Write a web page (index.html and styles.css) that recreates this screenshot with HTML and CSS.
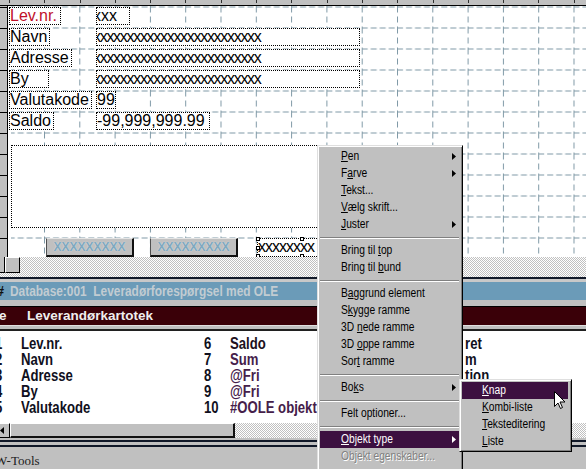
FILE: index.html
```html
<!DOCTYPE html>
<html lang="da">
<head>
<meta charset="utf-8">
<title>W-Tools</title>
<link rel="stylesheet" href="styles.css">
</head>
<body>
<div class="app">
  <div class="designer">
    <div class="hruler"></div>
    <div class="dmain">
      <div class="vruler"></div>
      <div class="canvas">
        <svg class="grid" width="578" height="251" viewBox="0 0 578 251">
          <defs>
            <pattern id="gp" x="0.7" y="0.5" width="35.3" height="21" patternUnits="userSpaceOnUse">
              <path d="M0 0.5H35.3" stroke="#7f99a6" stroke-width="1" stroke-dasharray="6 3" fill="none"/>
              <path d="M0.5 0V21" stroke="#7f99a6" stroke-width="1" stroke-dasharray="6 4" fill="none"/>
            </pattern>
          </defs>
          <rect width="578" height="251" fill="url(#gp)"/>
          <rect width="3" height="251" fill="#fff"/>
        </svg>
        <div class="form">
          <div class="rows">
            <div class="frow"><div class="lcell"><span class="lbl red">Lev.nr.</span></div><span class="fld f-short xs">xxx</span></div>
            <div class="frow"><div class="lcell"><span class="lbl">Navn</span></div><span class="fld f-long xs xl">xxxxxxxxxxxxxxxxxxxxxxxxx</span></div>
            <div class="frow"><div class="lcell"><span class="lbl">Adresse</span></div><span class="fld f-long xs xl">xxxxxxxxxxxxxxxxxxxxxxxxx</span></div>
            <div class="frow"><div class="lcell"><span class="lbl w-by">By</span></div><span class="fld f-long xs xl">xxxxxxxxxxxxxxxxxxxxxxxxx</span></div>
            <div class="frow"><div class="lcell"><span class="lbl">Valutakode</span></div><span class="fld f-num">99</span></div>
            <div class="frow"><div class="lcell"><span class="lbl">Saldo</span></div><span class="fld f-saldo">-99,999,999.99</span></div>
          </div>
          <div class="bigbox"></div>
          <div class="btnrow">
            <span class="dbtn">XXXXXXXXX</span>
            <span class="dbtn">XXXXXXXXX</span>
            <span class="fld f-sel">xxxxxxxx<i class="hd hd1"></i><i class="hd hd2"></i><i class="hd hd3"></i><i class="hd hd4"></i><i class="hd hd5"></i></span>
          </div>
        </div>
      </div>
    </div>
  </div>
  <div class="dscroll"><span class="sb1"></span><span class="sb2"></span></div>
  <div class="win">
    <div class="wtop"></div>
    <div class="cap1"><span class="capicon">#</span><span class="nar">Database:001&nbsp;&nbsp;Leveradørforespørgsel med OLE</span></div>
    <div class="gap6"></div>
    <div class="cap2"><span class="cap2e">e</span><span>Leverandørkartotek</span></div>
    <div class="sep2"></div>
    <div class="list">
      <div class="lrow"><span>1</span><span>Lev.nr.</span><span>6</span><span class="c2a">Saldo</span><span>11</span><span><b class="pre">Ænd</b>ret</span></div>
      <div class="lrow"><span>2</span><span>Navn</span><span>7</span><span class="c2">Sum</span><span>12</span><span><b class="pre">Datu</b>m</span></div>
      <div class="lrow"><span>3</span><span>Adresse</span><span>8</span><span class="c2">@Fri</span><span>13</span><span><b class="pre">Posi</b>tion</span></div>
      <div class="lrow"><span>4</span><span>By</span><span>9</span><span class="c2">@Fri</span><span>14</span><span>Note</span></div>
      <div class="lrow"><span>5</span><span>Valutakode</span><span>10</span><span class="c2">#OOLE objekt</span><span>15</span><span>Tekst</span></div>
    </div>
    <div class="lscroll"><span class="larrow"><svg width="4" height="7" viewBox="0 0 4 7"><path d="M4 0L0 3.5L4 7Z" fill="#000"/></svg></span><span class="thumb"></span></div>
    <div class="wbottom"></div>
  </div>
  <div class="status">W-Tools</div>
</div>

<div class="menu">
  <div class="mi"><span><u>P</u>en</span><svg class="arr" width="4" height="7" viewBox="0 0 4 7"><path d="M0 0L4 3.5L0 7Z"/></svg></div>
  <div class="mi"><span>F<u>a</u>rve</span><svg class="arr" width="4" height="7" viewBox="0 0 4 7"><path d="M0 0L4 3.5L0 7Z"/></svg></div>
  <div class="mi"><span><u>T</u>ekst...</span></div>
  <div class="mi"><span><u>V</u>ælg skrift...</span></div>
  <div class="mi"><span><u>J</u>uster</span><svg class="arr" width="4" height="7" viewBox="0 0 4 7"><path d="M0 0L4 3.5L0 7Z"/></svg></div>
  <div class="msep"></div>
  <div class="mi"><span>Bring til <u>t</u>op</span></div>
  <div class="mi"><span>Bring til <u>b</u>und</span></div>
  <div class="msep"></div>
  <div class="mi"><span>B<u>a</u>ggrund element</span></div>
  <div class="mi"><span>S<u>k</u>ygge ramme</span></div>
  <div class="mi"><span>3D <u>n</u>ede ramme</span></div>
  <div class="mi"><span>3D <u>o</u>ppe ramme</span></div>
  <div class="mi"><span>Sor<u>t</u> ramme</span></div>
  <div class="msep"></div>
  <div class="mi"><span>Bo<u>k</u>s</span><svg class="arr" width="4" height="7" viewBox="0 0 4 7"><path d="M0 0L4 3.5L0 7Z"/></svg></div>
  <div class="msep"></div>
  <div class="mi"><span>Felt optioner...</span></div>
  <div class="msep"></div>
  <div class="mi hl"><span><u>O</u>bjekt type</span><svg class="arr" width="4" height="7" viewBox="0 0 4 7"><path d="M0 0L4 3.5L0 7Z"/></svg></div>
  <div class="mi dis"><span>Objekt egenskaber...</span></div>
</div>

<div class="menu submenu">
  <div class="mi hl"><span><u>K</u>nap</span></div>
  <div class="mi"><span><u>K</u>ombi-liste</span></div>
  <div class="mi"><span><u>T</u>eksteditering</span></div>
  <div class="mi"><span><u>L</u>iste</span></div>
</div>

<svg class="cursor" width="13" height="19" viewBox="0 0 13 19"><path d="M0.5 0.5V15.5L4 12L6.5 17.5L8.5 16.5L6 11H11Z" fill="#fff" stroke="#000" stroke-width="1" stroke-linejoin="miter"/></svg>
</body>
</html>
```
FILE: styles.css
```css
* { box-sizing: border-box; }
html, body { margin: 0; padding: 0; }
body {
  width: 586px;
  height: 469px;
  overflow: hidden;
  position: relative;
  background: #c0c0c0;
  font-family: "Liberation Sans", Arial, sans-serif;
  color: #000;
}

.app { display: flex; flex-direction: column; height: 469px; }

/* narrow system font imitation */
.nar, .mi > span, .lrow > span {
  display: inline-block;
  transform: scaleX(0.82);
  transform-origin: 0 50%;
}

/* ---------- form designer ---------- */
.designer { height: 257px; flex: none; display: flex; flex-direction: column; }
.hruler {
  height: 6px;
  flex: none;
  background-color: #c0c0c0;
  border-bottom: 1px solid #000;
  background-image: repeating-linear-gradient(90deg, #303030 0 1px, transparent 1px 35.3px);
  background-size: 100% 3px;
  background-repeat: no-repeat;
  background-position: 9px 0;
}
.dmain { flex: 1; display: flex; min-height: 0; }
.vruler {
  width: 8px;
  flex: none;
  background-color: #c0c0c0;
  border-right: 1px solid #000;
  background-image: repeating-linear-gradient(180deg, #000 0 1px, transparent 1px 21px);
  background-position: 0 1px;
}
.canvas { flex: 1; display: grid; background: #fff; overflow: hidden; }
.canvas > * { grid-area: 1 / 1; }
.grid { display: block; }
.form { display: flex; flex-direction: column; padding: 1px 0 0 1px; }
.rows { display: flex; flex-direction: column; gap: 3px; }
.frow { display: flex; height: 18px; }
.lcell { width: 87px; flex: none; }

.lbl, .fld {
  display: inline-block;
  height: 18px;
  border: 1px dotted #000;
  background: #fff;
  font-size: 16px;
  line-height: 16px;
  white-space: nowrap;
  overflow: hidden;
}
.lbl { padding: 0 2px 0 0; }
.lbl.red { color: #c0102a; padding-right: 3px; }
.lbl.w-by { width: 40px; }
.f-short { width: 34px; }
.f-long { width: 264px; }
.f-num { width: 20px; }
.f-saldo { width: 114px; }
.xs { text-indent: -4px; }
.xl { letter-spacing: -1.3px; }

.bigbox {
  margin: 15px 0 0 2px;
  width: 386px;
  height: 83px;
  border: 1px dotted #000;
  background: #fff;
}

.btnrow { display: flex; height: 19px; margin-top: 10px; }
.dbtn {
  width: 88px;
  height: 19px;
  margin-left: 37px;
  background: #c0c0c0;
  border-top: 1px solid #e4e4e4;
  border-left: 1px solid #505050;
  border-right: 2px solid #111;
  border-bottom: 2px solid #111;
  color: #7ea8be;
  font-weight: bold;
  font-size: 12px;
  text-shadow: 0 0 1px #e8f0f4;
  display: flex;
  align-items: center;
  justify-content: center;
}
.dbtn + .dbtn { margin-left: 16px; }
.f-sel {
  width: 88px;
  height: 19px;
  margin-left: 19px;
  position: relative;
  overflow: visible;
  letter-spacing: -1px;
}
.hd {
  position: absolute;
  width: 4px;
  height: 4px;
  background: #fff;
  border: 1px solid #000;
}
.hd1 { left: -2px; top: -2px; }
.hd2 { left: 42px; top: -2px; }
.hd3 { left: -2px; top: 7px; }
.hd4 { left: -2px; top: 15px; }
.hd5 { left: 42px; top: 15px; }

.dscroll {
  height: 20px;
  flex: none;
  display: flex;
  align-items: flex-start;
  background: repeating-conic-gradient(#c0c0c0 0 25%, #fff 0 50%) 0 0 / 2px 2px;
}
.sb1 { width: 5px; height: 16px; background: #c0c0c0; border-right: 1px solid #000; border-bottom: 1px solid #000; }
.sb2 {
  width: 15px; height: 16px; background: #c0c0c0;
  border-top: 1px solid #fff; border-left: 1px solid #fff;
  border-right: 1px solid #000; border-bottom: 1px solid #000;
}

/* ---------- database window ---------- */
.win { flex: none; display: flex; flex-direction: column; }
.wtop { height: 5px; border-top: 2px solid #101828; background: #c8c8c8; }
.cap1 {
  height: 18px;
  background: #6b9bb8;
  color: #c2ccd2;
  font-weight: bold;
  font-size: 14.5px;
  line-height: 18px;
  white-space: nowrap;
  overflow: hidden;
  display: flex;
}
.capicon { display: inline-block; width: 14px; margin-left: -4px; color: #101010; flex: none; }
.gap6 { height: 6px; background: #c0c0c0; }
.cap2 {
  height: 19px;
  border-top: 1px solid #000;
  background: #3a0008;
  color: #f0eeee;
  font-weight: bold;
  font-size: 13.5px;
  line-height: 18px;
  display: flex;
  white-space: nowrap;
}
.cap2e { width: 28px; margin-left: -1px; }
.sep2 { height: 6px; background: #c0c0c0; border-top: 1px solid #e0e0e0; border-bottom: 2px solid #202020; }
.list {
  height: 92px;
  background: #fff;
  padding-top: 5px;
  font-weight: bold;
  font-size: 16px;
  line-height: 16px;
  color: #101020;
  overflow: hidden;
}
.lrow {
  display: grid;
  grid-template-columns: 26px 183px 26px 183px 23px 183px;
  margin-left: -5px;
  height: 16px;
  white-space: nowrap;
}
.pre {
  display: inline-block;
  width: 33px;
  margin-right: 2.5px;
  overflow: hidden;
  vertical-align: top;
  font-weight: bold;
}
.c2a { color: #201020; }
.c2 { color: #45204a; }

.lscroll {
  height: 15px;
  display: flex;
  background: repeating-conic-gradient(#c0c0c0 0 25%, #fff 0 50%) 0 0 / 2px 2px;
}
.larrow {
  width: 10px;
  height: 15px;
  background: #c0c0c0;
  border-top: 1px solid #fff;
  border-right: 1px solid #000;
  border-bottom: 1px solid #000;
  display: flex;
  align-items: center;
}
.larrow svg { display: block; }
.thumb {
  width: 225px;
  height: 15px;
  background: #c0c0c0;
  border-top: 1px solid #fff;
  border-left: 1px solid #fff;
  border-right: 2px solid #101010;
  border-bottom: 2px solid #101010;
}
.wbottom {
  height: 9px;
  background: linear-gradient(180deg, #c0c0c0 0 2px, #101828 2px 4px, #c0c0c0 4px 7px, #101828 7px 9px);
}
.status {
  height: 22px;
  flex: none;
  background: #c0c0c0;
  font-family: "Liberation Serif", "Times New Roman", serif;
  font-size: 13px;
  line-height: 16px;
  padding-top: 6px;
  text-indent: -5px;
  color: #202020;
  white-space: nowrap;
}

/* ---------- context menus ---------- */
.menu {
  position: absolute;
  left: 317px;
  top: 145px;
  width: 146px;
  height: 340px;
  background: #c0c0c0;
  border: 1px solid;
  border-color: #dfdfdf #000 #000 #dfdfdf;
  box-shadow: inset 1px 1px #fff, inset -1px -1px #808080;
  padding: 2px 3px 1px 2px;
  font-size: 12.5px;
  color: #000;
}
.submenu { left: 459px; top: 379px; width: 113px; height: 73px; }
.mi {
  height: 17px;
  line-height: 17px;
  padding-left: 21px;
  display: flex;
  align-items: center;
  white-space: nowrap;
}
.submenu .mi { padding-left: 20px; }
.mi u { text-decoration-thickness: 1px; text-underline-offset: 1px; }
.arr { margin-left: auto; margin-right: 3px; fill: #000; flex: none; }
.mi.hl { background: #3c1040; color: #fff; }
.mi.hl .arr { fill: #fff; }
.mi.dis { color: #808080; text-shadow: 1px 1px 0 #fff; }
.msep { height: 2px; margin: 4px 0 3px; border-top: 1px solid #808080; border-bottom: 1px solid #fff; }

.cursor { position: absolute; left: 554px; top: 391px; }
```
